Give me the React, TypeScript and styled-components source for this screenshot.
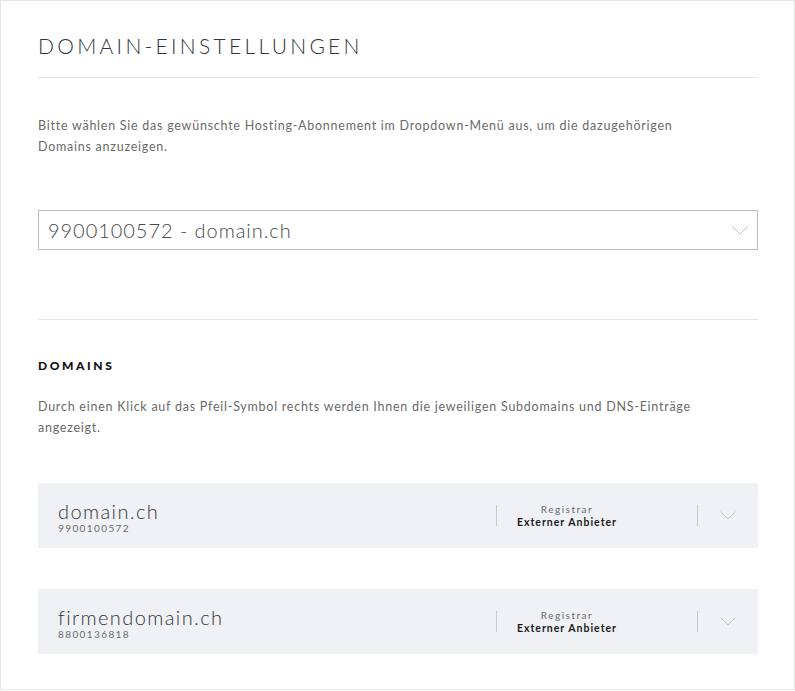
import React from 'react';
import styled, { createGlobalStyle } from 'styled-components';

const GlobalStyle = createGlobalStyle`
  html, body {
    margin: 0;
    padding: 0;
    background: #fff;
  }
  body {
    font-family: Lato, "Open Sans", sans-serif;
    color: #333;
  }
`;

const Page = styled.div`
  box-sizing: border-box;
  width: 795px;
  height: 690px;
  border: 1px solid #e6e6e6;
  padding: 0 36px 0 37px;
  overflow: hidden;
`;

const Title = styled.h1`
  margin: 0;
  padding: 31px 0 0;
  font-size: 21px;
  font-weight: 300;
  letter-spacing: 3.3px;
  line-height: 28px;
  color: #2f3440;
`;

const Divider = styled.hr<{ gap: number }>`
  border: 0;
  border-top: 1px solid #e5e5e5;
  margin: ${(p) => p.gap}px 0 0;
`;

const Text = styled.p<{ gap: number }>`
  margin: ${(p) => p.gap}px 0 0;
  font-size: 12.5px;
  line-height: 21px;
  letter-spacing: 0.75px;
  color: #6a6a6a;
  max-width: 690px;
`;

const Select = styled.div`
  box-sizing: border-box;
  margin-top: 53px;
  height: 40px;
  border: 1px solid #bdbdbd;
  display: flex;
  align-items: center;
  justify-content: space-between;
  padding: 0 9px 0 9px;
  font-size: 20px;
  font-weight: 300;
  letter-spacing: 0.95px;
  color: #4a4a4a;
`;

const SubTitle = styled.h2`
  margin: 38px 0 0;
  font-size: 12px;
  font-weight: 900;
  letter-spacing: 2.6px;
  line-height: 15px;
  color: #111;
`;

const List = styled.div`
  margin-top: 45px;
  display: flex;
  flex-direction: column;
  gap: 41px;
`;

const Row = styled.div`
  height: 65px;
  background: #f0f1f5;
  display: flex;
  align-items: center;
  padding: 0 0 0 20px;
`;

const NameBlock = styled.div`
  flex: 1;
  display: flex;
  flex-direction: column;
  padding-top: 3px;
`;

const Name = styled.div`
  font-size: 20px;
  font-weight: 300;
  letter-spacing: 1.4px;
  line-height: 23px;
  color: #2f3440;
`;

const Number = styled.div`
  font-size: 10px;
  letter-spacing: 1.4px;
  line-height: 11px;
  color: #6a6a6a;
`;

const Registrar = styled.div`
  box-sizing: border-box;
  width: 202px;
  height: 21px;
  padding-right: 60px;
  border-left: 1px solid #c9c9cc;
  border-right: 1px solid #c9c9cc;
  display: flex;
  flex-direction: column;
  align-items: center;
  justify-content: center;
`;

const Label = styled.div`
  font-size: 10px;
  letter-spacing: 1.5px;
  line-height: 13px;
  color: #6a6a6a;
`;

const Value = styled.div`
  font-size: 10.5px;
  font-weight: 700;
  letter-spacing: 1px;
  line-height: 13px;
  color: #1a1a1a;
`;

const Toggle = styled.div`
  width: 60px;
  display: flex;
  justify-content: center;
  align-items: center;
`;

const Chevron = ({ color }: { color: string }) => (
  <svg width="16" height="9" viewBox="0 0 16 9" fill="none">
    <polyline points="0.5,0.5 8,8 15.5,0.5" stroke={color} strokeWidth="1" />
  </svg>
);

const domains = [
  { name: 'domain.ch', id: '9900100572', registrar: 'Externer Anbieter' },
  { name: 'firmendomain.ch', id: '8800136818', registrar: 'Externer Anbieter' },
];

const App = () => (
  <>
    <GlobalStyle />
    <Page>
      <Title>DOMAIN-EINSTELLUNGEN</Title>
      <Divider gap={17} />
      <Text gap={37}>
        Bitte wählen Sie das gewünschte Hosting-Abonnement im Dropdown-Menü aus, um die dazugehörigen
        Domains anzuzeigen.
      </Text>
      <Select>
        <span>9900100572 - domain.ch</span>
        <Chevron color="#c4c4c4" />
      </Select>
      <Divider gap={69} />
      <SubTitle>DOMAINS</SubTitle>
      <Text gap={23}>
        Durch einen Klick auf das Pfeil-Symbol rechts werden Ihnen die jeweiligen Subdomains und DNS-Einträge
        angezeigt.
      </Text>
      <List>
        {domains.map((d) => (
          <Row key={d.id}>
            <NameBlock>
              <Name>{d.name}</Name>
              <Number>{d.id}</Number>
            </NameBlock>
            <Registrar>
              <Label>Registrar</Label>
              <Value>{d.registrar}</Value>
            </Registrar>
            <Toggle>
              <Chevron color="#c4c6cc" />
            </Toggle>
          </Row>
        ))}
      </List>
    </Page>
  </>
);

export default App;
